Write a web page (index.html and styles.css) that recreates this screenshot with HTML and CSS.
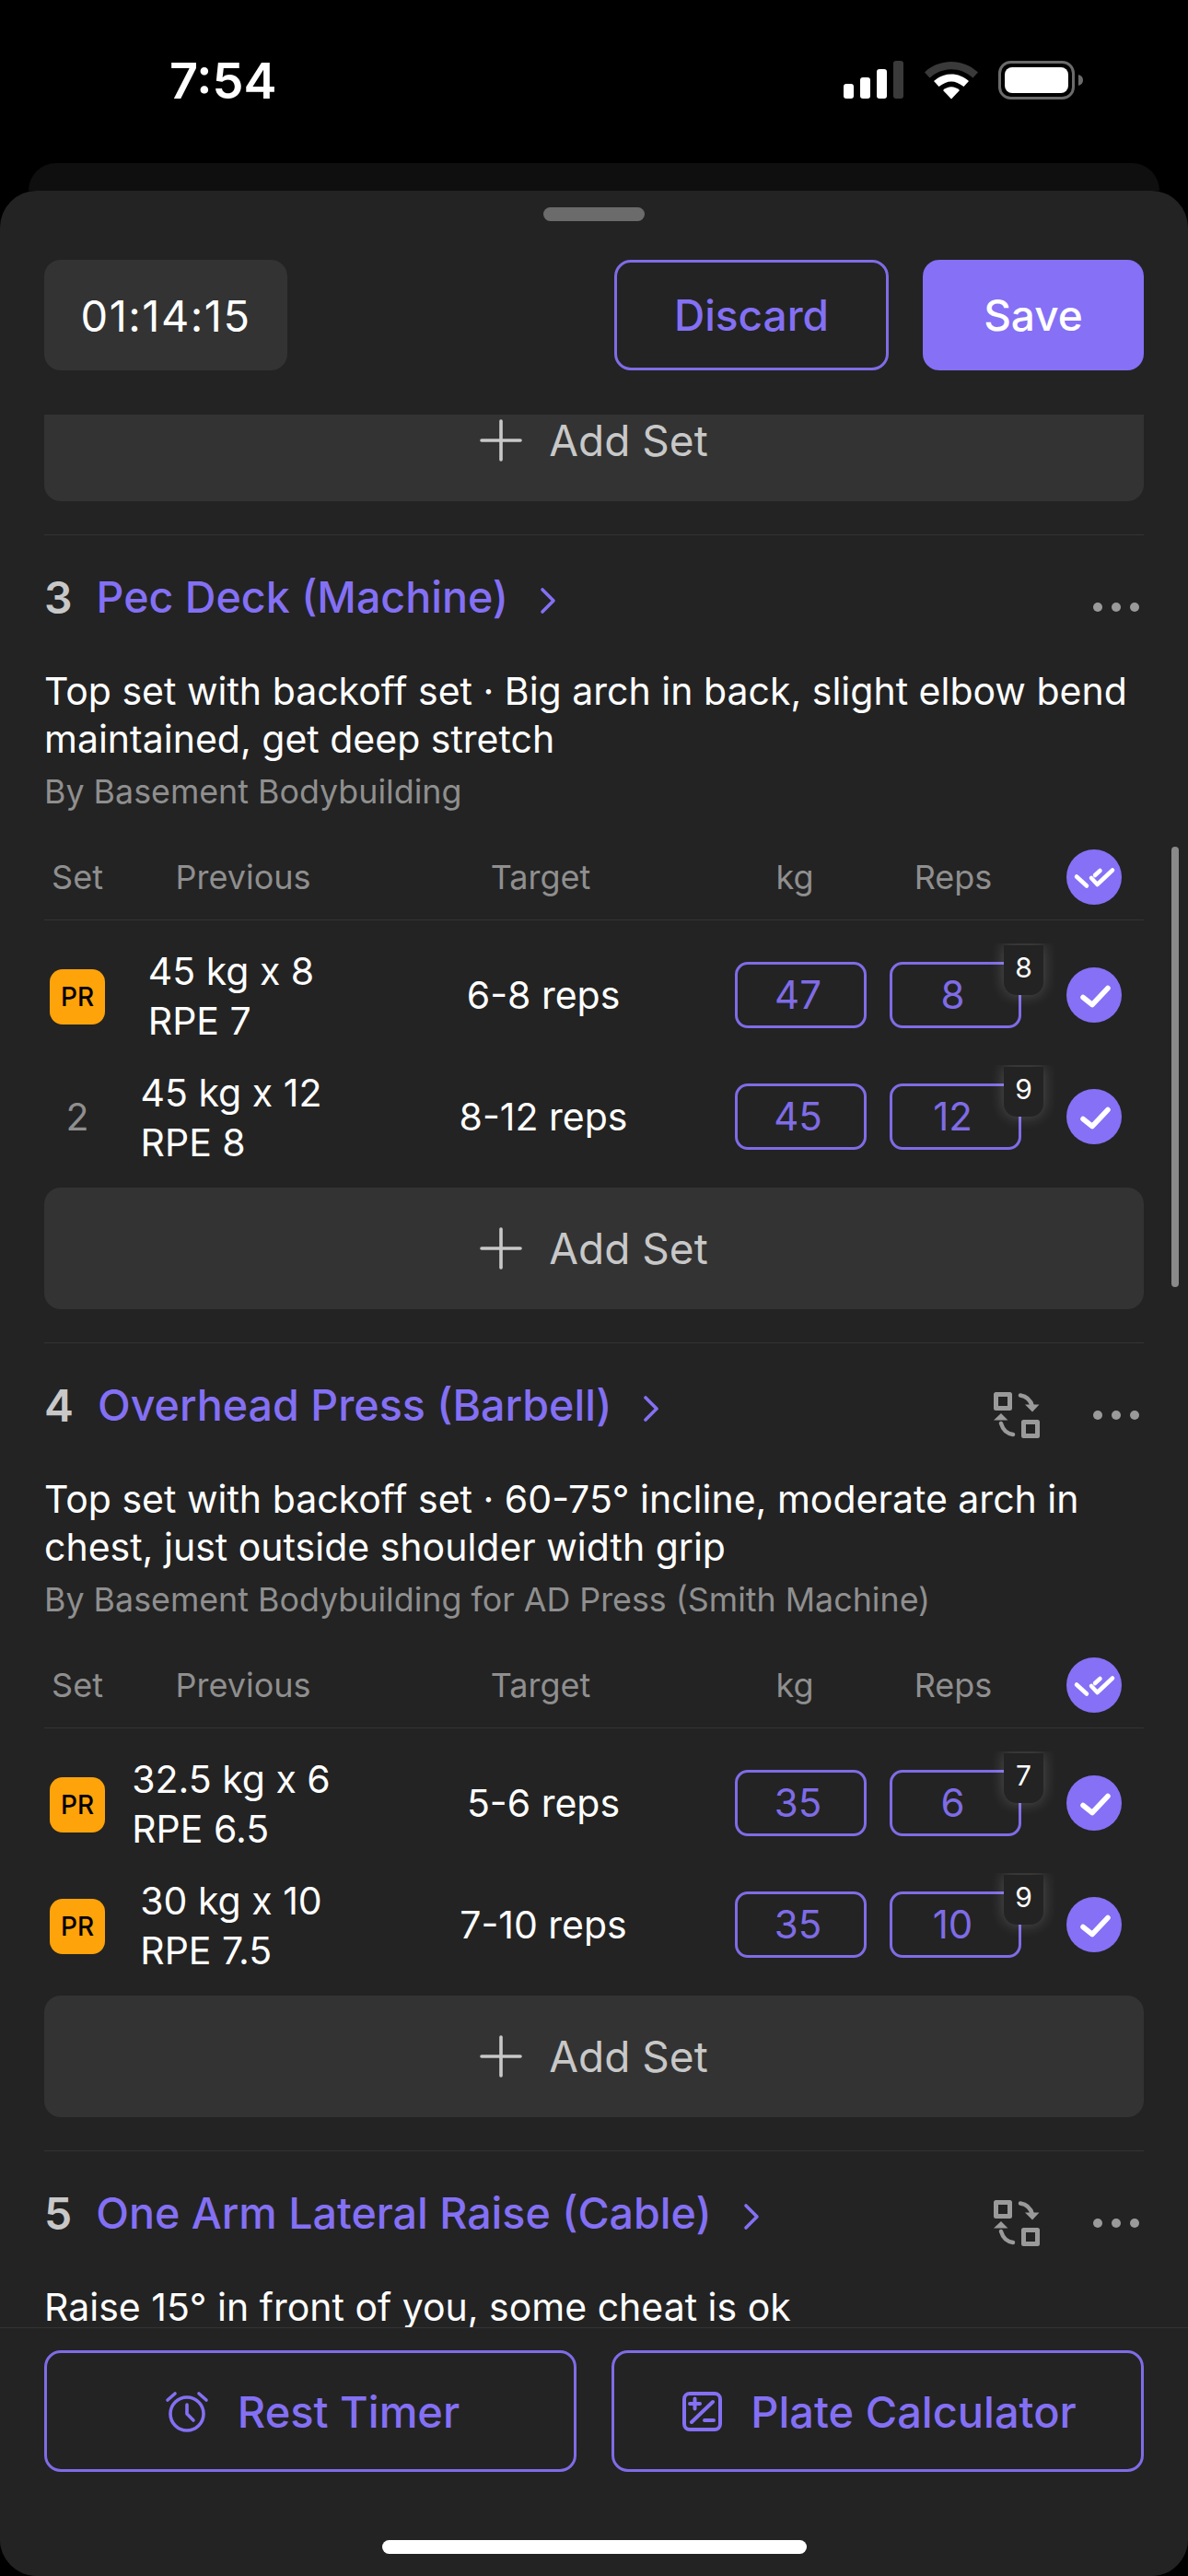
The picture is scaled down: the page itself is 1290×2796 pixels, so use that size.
FILE: index.html
```html
<!DOCTYPE html>
<html lang="en">
<head>
    <meta charset="UTF-8">
    <meta name="viewport" content="width=device-width, initial-scale=1.0">
    <title>Workout</title>
    <link rel="stylesheet" href="styles.css">
</head>
<body>
    <svg class="icon-defs" width="0" height="0">
        <defs>
            <symbol id="i-check" viewBox="0 0 60 60"><path d="M18 32.500l10 8 17-18" fill="none" stroke="#fff" stroke-width="5.500" stroke-linecap="round" stroke-linejoin="round"/></symbol>
            <symbol id="i-double" viewBox="0 0 60 60"><path d="M11 29.500l11 10M27 31l6.500 7L50 22.500M31 28l5.500-5" fill="none" stroke="#fff" stroke-width="4.500" stroke-linecap="round" stroke-linejoin="round"/></symbol>
            <symbol id="i-plus" viewBox="0 0 46 46"><path d="M23 2v42M2 23h42" fill="none" stroke="currentColor" stroke-width="3.6" stroke-linecap="round"/></symbol>
            <symbol id="i-chevron" viewBox="0 0 18 30"><path d="M3 3l12 12L3 27" fill="none" stroke="currentColor" stroke-width="3.6" stroke-linecap="round" stroke-linejoin="round"/></symbol>
            <symbol id="i-swap" viewBox="0 0 51 50">
                <path d="M2.500 2.500h15v15h-15zM32.500 32.500h15v15h-15z" fill="none" stroke="#9a9a9a" stroke-width="5" stroke-linejoin="round"/>
                <path d="M29 3.500c7 1 11 5 13 12M21 46c-7-1-11-5-13-12" fill="none" stroke="#9a9a9a" stroke-width="4.500" stroke-linecap="round"/>
                <path d="M34 13.500h15.500L42 21.500zM0 30.500h15.500L8 23z" fill="#9a9a9a"/>
            </symbol>
            <symbol id="i-dots" viewBox="0 0 50 10"><circle cx="5" cy="5" r="5" fill="#9a9a9a"/><circle cx="25" cy="5" r="5" fill="#9a9a9a"/><circle cx="45" cy="5" r="5" fill="#9a9a9a"/></symbol>
        </defs>
    </svg>

    <header class="status-bar">
        <span class="clock">7:54</span>
        <div class="status-icons">
            <svg width="66" height="41" viewBox="0 0 66 41">
                <rect x="0" y="25" width="11" height="16" rx="3" fill="#fff"/>
                <rect x="18" y="18" width="11" height="23" rx="3" fill="#fff"/>
                <rect x="36" y="9" width="11" height="32" rx="3" fill="#fff"/>
                <rect x="54" y="0" width="11" height="41" rx="3" fill="#3a3a3a"/>
            </svg>
            <svg width="58" height="42" viewBox="0 0 58 42">
                <path d="M0 12.500C16 -3 42 -3 58 12.500L52.500 18.500C39 6 19 6 5.500 18.500z" fill="#3a3a3a"/>
                <path d="M10 22C21 12 37 12 48 22L42.500 28C33 20.500 25 20.500 15.500 28z" fill="#fff"/>
                <path d="M20 32C25.500 27 32.500 27 38 32L29 41.500z" fill="#fff"/>
            </svg>
            <svg width="93" height="42" viewBox="0 0 93 42">
                <rect x="1.500" y="1.500" width="80" height="39" rx="12" fill="none" stroke="#6b6b6b" stroke-width="3"/>
                <rect x="7" y="7" width="69" height="28" rx="8" fill="#fff"/>
                <path d="M87 15c3.500 1 5 3 5 6s-1.500 5-5 6z" fill="#6b6b6b"/>
            </svg>
        </div>
    </header>
    <div class="back-sheet"></div>

    <main class="sheet">
        <div class="handle"></div>
        <div class="top-bar">
            <div class="timer">01:14:15</div>
            <button class="btn btn-outline btn-discard">Discard</button>
            <button class="btn btn-solid btn-save">Save</button>
        </div>

        <div class="scroll-area">
            <div class="scroll-content">
                <button class="add-set add-set-cut"><svg class="plus"><use href="#i-plus"/></svg>Add Set</button>

                <section class="exercise">
                    <div class="ex-head">
                        <span class="ex-num">3</span>
                        <a class="ex-name">Pec Deck (Machine)</a>
                        <svg class="chevron"><use href="#i-chevron"/></svg>
                        <div class="ex-actions">
                            <svg class="dots"><use href="#i-dots"/></svg>
                        </div>
                    </div>
                    <p class="ex-notes">Top set with backoff set · Big arch in back, slight elbow bend maintained, get deep stretch</p>
                    <p class="ex-by">By Basement Bodybuilding</p>
                    <div class="set-grid set-head">
                        <span>Set</span>
                        <span class="head-prev">Previous</span>
                        <span class="head-target">Target</span>
                        <span class="head-kg">kg</span>
                        <span class="head-reps">Reps</span>
                        <span class="check"><svg><use href="#i-double"/></svg></span>
                    </div>
                    <div class="set-rows">
                        <div class="set-grid set-row">
                            <span class="pr">PR</span>
                            <div class="prev"><div>45 kg x 8<br>RPE 7</div></div>
                            <span class="target">6-8 reps</span>
                            <span class="field">47</span>
                            <span class="field">8<b class="rpe">8</b></span>
                            <span class="check"><svg><use href="#i-check"/></svg></span>
                        </div>
                        <div class="set-grid set-row">
                            <span class="set-num">2</span>
                            <div class="prev"><div>45 kg x 12<br>RPE 8</div></div>
                            <span class="target">8-12 reps</span>
                            <span class="field">45</span>
                            <span class="field">12<b class="rpe">9</b></span>
                            <span class="check"><svg><use href="#i-check"/></svg></span>
                        </div>
                    </div>
                    <button class="add-set"><svg class="plus"><use href="#i-plus"/></svg>Add Set</button>
                </section>

                <section class="exercise">
                    <div class="ex-head">
                        <span class="ex-num">4</span>
                        <a class="ex-name">Overhead Press (Barbell)</a>
                        <svg class="chevron"><use href="#i-chevron"/></svg>
                        <div class="ex-actions">
                            <svg class="swap"><use href="#i-swap"/></svg>
                            <svg class="dots"><use href="#i-dots"/></svg>
                        </div>
                    </div>
                    <p class="ex-notes">Top set with backoff set · 60-75° incline, moderate arch in chest, just outside shoulder width grip</p>
                    <p class="ex-by">By Basement Bodybuilding for AD Press (Smith Machine)</p>
                    <div class="set-grid set-head">
                        <span>Set</span>
                        <span class="head-prev">Previous</span>
                        <span class="head-target">Target</span>
                        <span class="head-kg">kg</span>
                        <span class="head-reps">Reps</span>
                        <span class="check"><svg><use href="#i-double"/></svg></span>
                    </div>
                    <div class="set-rows">
                        <div class="set-grid set-row">
                            <span class="pr">PR</span>
                            <div class="prev"><div>32.5 kg x 6<br>RPE 6.5</div></div>
                            <span class="target">5-6 reps</span>
                            <span class="field">35</span>
                            <span class="field">6<b class="rpe">7</b></span>
                            <span class="check"><svg><use href="#i-check"/></svg></span>
                        </div>
                        <div class="set-grid set-row">
                            <span class="pr">PR</span>
                            <div class="prev"><div>30 kg x 10<br>RPE 7.5</div></div>
                            <span class="target">7-10 reps</span>
                            <span class="field">35</span>
                            <span class="field">10<b class="rpe">9</b></span>
                            <span class="check"><svg><use href="#i-check"/></svg></span>
                        </div>
                    </div>
                    <button class="add-set"><svg class="plus"><use href="#i-plus"/></svg>Add Set</button>
                </section>

                <section class="exercise">
                    <div class="ex-head">
                        <span class="ex-num">5</span>
                        <a class="ex-name">One Arm Lateral Raise (Cable)</a>
                        <svg class="chevron"><use href="#i-chevron"/></svg>
                        <div class="ex-actions">
                            <svg class="swap"><use href="#i-swap"/></svg>
                            <svg class="dots"><use href="#i-dots"/></svg>
                        </div>
                    </div>
                    <p class="ex-notes">Raise 15° in front of you, some cheat is ok</p>
                </section>
            </div>
            <div class="scroll-thumb"></div>
        </div>

        <footer class="bottom-bar">
            <div class="bottom-btns">
                <button class="btn btn-outline btn-tool">
                    <svg class="tool-icon" width="48" height="45" viewBox="0 0 48 45" fill="none" stroke="currentColor" stroke-width="3.600" stroke-linecap="round" stroke-linejoin="round">
                        <circle cx="24" cy="25" r="18"/>
                        <path d="M24 15v10l7 7M3 10l8-7M45 10l-8-7"/>
                    </svg>
                    Rest Timer
                </button>
                <button class="btn btn-outline btn-tool">
                    <svg class="tool-icon" width="43" height="43" viewBox="0 0 43 43" fill="none" stroke="currentColor" stroke-width="4" stroke-linecap="round" stroke-linejoin="round">
                        <rect x="2" y="2" width="39" height="39" rx="6"/>
                        <path d="M33 11L10 33M8 13h11M13.500 7.500v11M24 31h10"/>
                    </svg>
                    Plate Calculator
                </button>
            </div>
            <div class="home-bar"></div>
        </footer>
    </main>
</body>
</html>
```

FILE: styles.css
```css
* {
    box-sizing: border-box;
}

html, body {
    height: 100%;
}

body {
    margin: 0;
    background-color: #000;
    color: #fff;
    font-family: "Inter", "Liberation Sans", sans-serif;
    display: flex;
    flex-direction: column;
    overflow: hidden;
}

button {
    font-family: inherit;
    background: none;
    border: none;
    padding: 0;
}

p {
    margin: 0;
}

.icon-defs {
    position: absolute;
}

/* status bar */
.status-bar {
    height: 177px;
    flex: none;
    display: flex;
    justify-content: space-between;
    padding: 57px 113px 0 184px;
}

.clock {
    font-size: 54px;
    font-weight: 600;
    line-height: 62px;
}

.status-icons {
    display: flex;
    gap: 22px;
    padding: 9px 0 0 0;
    height: 51px;
}

.back-sheet {
    flex: none;
    height: 30px;
    margin: 0 31px;
    background-color: #0f0f0f;
    border-radius: 30px 30px 0 0;
}

/* main sheet */
.sheet {
    flex: 1;
    min-height: 0;
    display: flex;
    flex-direction: column;
    background-color: #232323;
    border-radius: 40px;
    overflow: hidden;
}

.handle {
    flex: none;
    width: 110px;
    height: 15px;
    margin: 18px auto 0;
    background-color: #6b6b6b;
    border-radius: 8px;
}

.top-bar {
    flex: none;
    display: flex;
    gap: 37px;
    margin-top: 42px;
    padding: 0 48px;
    height: 120px;
}

.timer {
    width: 264px;
    margin-right: auto;
    background-color: #333;
    border-radius: 18px;
    font-size: 47px;
    letter-spacing: 1.5px;
    display: flex;
    align-items: center;
    justify-content: center;
}

.btn {
    border-radius: 18px;
    font-size: 46px;
    font-weight: 500;
    display: flex;
    align-items: center;
    justify-content: center;
}

.btn-outline {
    border: 3px solid #7f6ce6;
    color: #8470f4;
}

.btn-solid {
    background-color: #8570f6;
    color: #fff;
}

.btn-discard {
    width: 298px;
}

.btn-save {
    width: 240px;
}

/* scrolling list */
.scroll-area {
    flex: 1;
    min-height: 0;
    margin-top: 48px;
    position: relative;
    overflow: hidden;
}

.scroll-content {
    padding: 0 48px;
}

.scroll-thumb {
    position: absolute;
    top: 469px;
    right: 10px;
    width: 8px;
    height: 478px;
    border-radius: 4px;
    background-color: #8a8a8a;
}

.add-set {
    display: flex;
    align-items: center;
    justify-content: center;
    gap: 29px;
    width: 100%;
    height: 132px;
    margin-top: 25px;
    background-color: #333;
    border-radius: 18px;
    color: #c8c8c8;
    font-size: 46px;
}

.add-set-cut {
    margin-top: -38px;
    margin-bottom: 36px;
}

.plus {
    width: 46px;
    height: 46px;
}

.exercise {
    padding: 36px 0;
    border-top: 1px solid #333;
}

.ex-head {
    display: flex;
    align-items: center;
    height: 66px;
}

.ex-num {
    font-size: 48px;
    font-weight: 600;
    color: #c8c8c8;
    margin: 0 26px 4px 0;
}

.ex-name {
    font-size: 46.6px;
    font-weight: 500;
    color: #8470f4;
    margin-bottom: 4px;
}

.chevron {
    width: 18px;
    height: 30px;
    margin: 4px 0 0 34px;
    color: #8470f4;
}

.ex-actions {
    margin-left: auto;
    display: flex;
    align-items: center;
    gap: 57px;
    padding: 18px 5px 0 0;
}

.swap {
    width: 51px;
    height: 50px;
}

.dots {
    width: 50px;
    height: 10px;
}

.ex-notes {
    margin-top: 41px;
    font-size: 41px;
    line-height: 52px;
}

.ex-by {
    margin-top: 8px;
    font-size: 35.8px;
    line-height: 46px;
    color: #8f8f8f;
}

/* set table */
.set-grid {
    display: grid;
    grid-template-columns: 72px 262px 416px 143px 168px 109px;
    align-items: center;
    justify-items: center;
    padding-right: 24px;
}

.set-grid > :nth-child(5),
.set-grid > :nth-child(6) {
    justify-self: end;
}

.set-head {
    margin-top: 24px;
    height: 93px;
    border-bottom: 1px solid #333;
    font-size: 36px;
    color: #8f8f8f;
}

.head-prev {
    padding-left: 26px;
}

.head-target {
    padding-right: 6px;
}

.head-kg {
    padding-right: 13px;
}

.set-head > .head-reps {
    justify-self: center;
    padding-left: 20px;
}

.set-rows {
    margin-top: 25px;
    display: flex;
    flex-direction: column;
    gap: 24px;
}

.set-row {
    height: 108px;
    overflow: hidden;
    font-size: 41px;
}

.pr {
    width: 60px;
    height: 60px;
    margin-top: 4px;
    border-radius: 14px;
    background-color: #ffa30a;
    color: #000;
    font-size: 28px;
    font-weight: 500;
    display: flex;
    align-items: center;
    justify-content: center;
}

.set-num {
    color: #8f8f8f;
}

.prev {
    padding-top: 3px;
    line-height: 54px;
}

.field {
    position: relative;
    width: 143px;
    height: 72px;
    padding-right: 6px;
    border: 3px solid #7f6ce6;
    border-radius: 14px;
    color: #7f6ce6;
    font-size: 42px;
    display: flex;
    align-items: center;
    justify-content: center;
}

.rpe {
    position: absolute;
    top: -21px;
    right: -27px;
    width: 43px;
    height: 54px;
    padding-bottom: 6px;
    border-radius: 0 0 14px 14px;
    background-color: #232323;
    box-shadow: 0 0 16px rgba(255, 255, 255, 0.22);
    color: #fff;
    font-size: 30px;
    font-weight: 400;
    display: flex;
    align-items: center;
    justify-content: center;
}

.check {
    width: 60px;
    height: 60px;
    border-radius: 50%;
    background-color: #8670f6;
}

.check svg {
    display: block;
    width: 60px;
    height: 60px;
}

/* bottom bar */
.bottom-bar {
    flex: none;
    border-top: 1px solid #333;
    background-color: #232323;
    padding: 24px 48px 24px;
}

.bottom-btns {
    display: flex;
    gap: 38px;
}

.btn-tool {
    flex: 1;
    height: 132px;
    gap: 31px;
    padding-left: 4px;
    font-size: 47px;
}

.home-bar {
    width: 461px;
    height: 15px;
    margin: 74px auto 0;
    border-radius: 8px;
    background-color: #fff;
}
```
